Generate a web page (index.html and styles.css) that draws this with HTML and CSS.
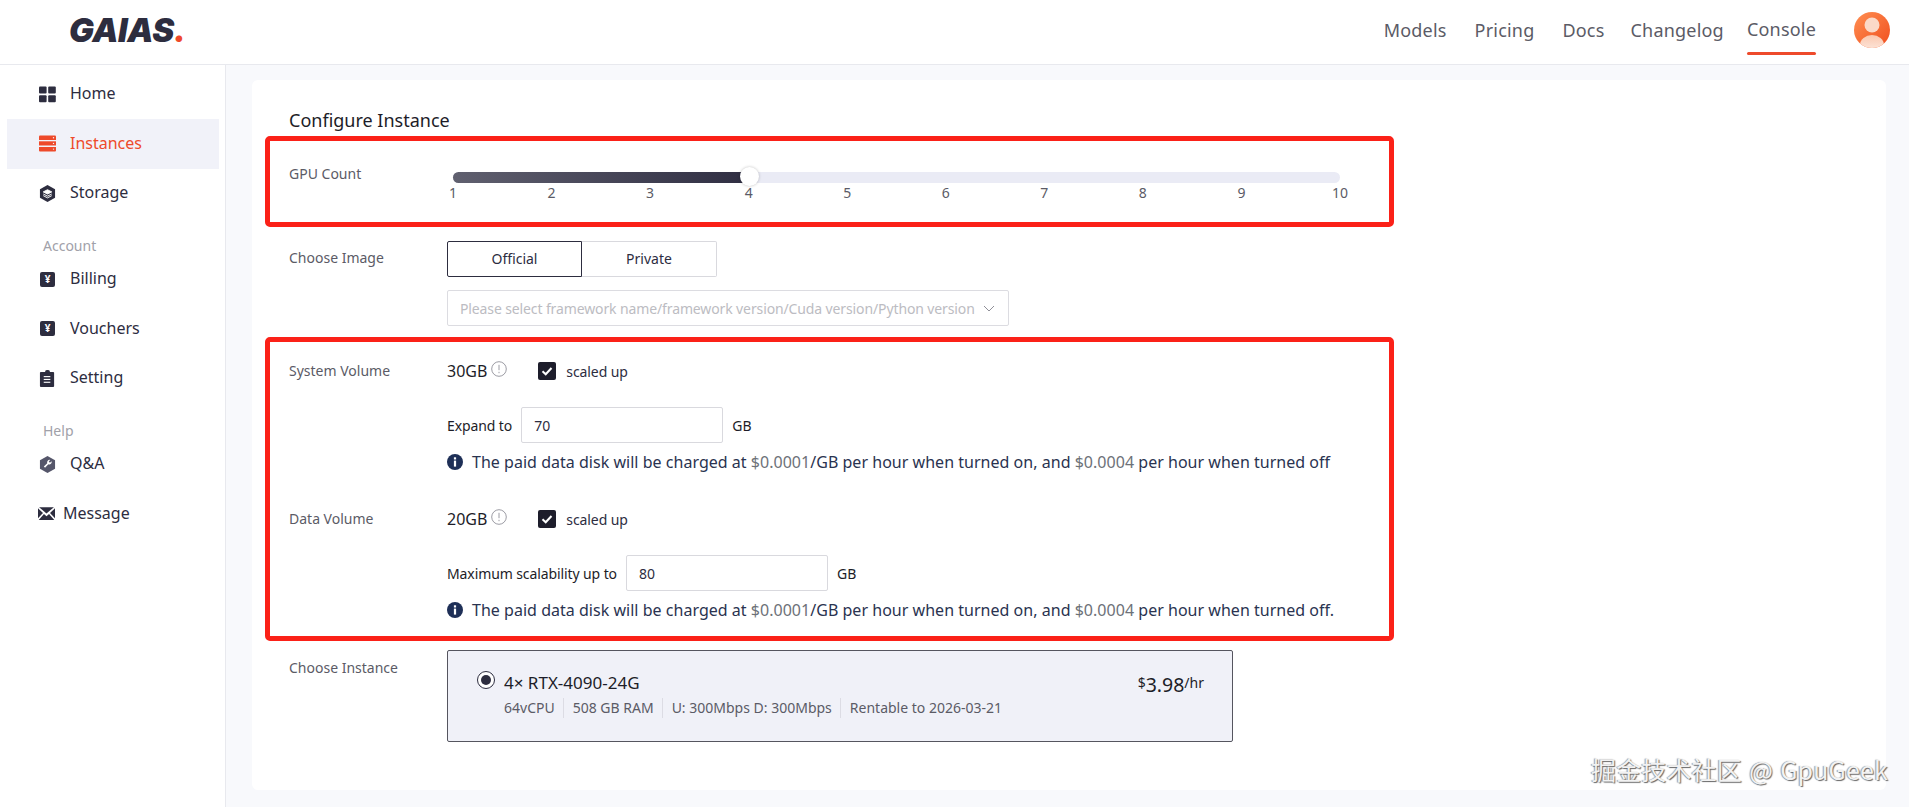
FILE: index.html
```html
<!DOCTYPE html>
<html lang="en">
<head>
    <meta charset="UTF-8">
    <meta name="viewport" content="width=device-width, initial-scale=1.0">
    <title>Configure Instance - GAIAS</title>
    <link rel="stylesheet" href="styles.css">
</head>
<body>
    <header class="topbar">
        <div class="logo">GAIAS<span class="logo-dot">.</span></div>
        <nav class="topnav">
            <a>Models</a>
            <a>Pricing</a>
            <a>Docs</a>
            <a class="tight">Changelog</a>
            <a class="current">Console</a>
        </nav>
        <svg class="avatar" viewBox="0 0 36 36">
            <defs>
                <linearGradient id="avatarBg" x1="0" y1="0" x2="1" y2="1">
                    <stop offset="0" stop-color="#ff8f52"/>
                    <stop offset="1" stop-color="#f04e1e"/>
                </linearGradient>
                <linearGradient id="avatarBody" x1="0" y1="0" x2="0" y2="1">
                    <stop offset="0" stop-color="#fbc7ae"/>
                    <stop offset="1" stop-color="#fdf1ea"/>
                </linearGradient>
                <clipPath id="avatarClip"><circle cx="18" cy="18" r="18"/></clipPath>
            </defs>
            <g clip-path="url(#avatarClip)">
                <rect width="36" height="36" fill="url(#avatarBg)"/>
                <circle cx="18" cy="13" r="7.5" fill="#fbd9c8"/>
                <ellipse cx="18" cy="33" rx="12" ry="10" fill="url(#avatarBody)"/>
            </g>
        </svg>
    </header>

    <div class="layout">
        <aside class="sidebar">
            <a class="side-item">
                <svg class="side-icon" viewBox="0 0 17 16"><rect x="0" y="0" width="7.6" height="7" rx="1"/><rect x="9.2" y="0" width="7.6" height="7" rx="1"/><rect x="0" y="8.8" width="7.6" height="7" rx="1"/><rect x="9.2" y="8.8" width="7.6" height="7" rx="1"/></svg>
                <span>Home</span>
            </a>
            <a class="side-item active">
                <svg class="side-icon" viewBox="0 0 17 16"><path d="M0 1a1 1 0 0 1 1-1h15a1 1 0 0 1 1 1v3.400H0z"/><rect x="0" y="5.800" width="17" height="4.200"/><path d="M0 11.400h17V15a1 1 0 0 1-1 1H1a1 1 0 0 1-1-1z"/><g fill="#f1f2f9"><circle cx="14.500" cy="2.300" r=".7"/><circle cx="14.500" cy="7.900" r=".7"/><circle cx="14.500" cy="13.600" r=".7"/></g></svg>
                <span>Instances</span>
            </a>
            <a class="side-item">
                <svg class="side-icon" viewBox="0 0 17 18"><path d="M8.500 0l8 4.400v9.200l-8 4.400-8-4.400V4.400z"/><g fill="none" stroke="#fff" stroke-width="1"><path d="M8.500 5l4.500 2.300-4.500 2.300L4 7.300z" fill="#fff"/><path d="M4 9.500l4.500 2.300L13 9.500"/><path d="M4 11.300l4.500 2.300 4.500-2.300"/></g></svg>
                <span>Storage</span>
            </a>

            <div class="side-group">Account</div>
            <a class="side-item">
                <i class="yen-icon">¥</i>
                <span>Billing</span>
            </a>
            <a class="side-item">
                <i class="yen-icon">¥</i>
                <span>Vouchers</span>
            </a>
            <a class="side-item">
                <svg class="side-icon" viewBox="0 0 16 18"><path d="M5.500 2V1.500a2.500 1.500 0 0 1 5 0V2h3.500a1 1 0 0 1 1 1v14a1 1 0 0 1-1 1H1a1 1 0 0 1-1-1V3a1 1 0 0 1 1-1z"/><g stroke="#fff" stroke-width="1.200"><path d="M4 7h7"/><path d="M4 10h7"/><path d="M4 13h7"/></g></svg>
                <span>Setting</span>
            </a>

            <div class="side-group">Help</div>
            <a class="side-item">
                <svg class="side-icon grey" viewBox="0 0 17 18"><path d="M8.500 0l8 4.400v9.200l-8 4.400-8-4.400V4.400z"/><path d="M12.800 5.500a2.600 2.600 0 0 1-3.400 3.300l-3.500 3.700-1.300-1.300 3.600-3.600a2.600 2.600 0 0 1 3.200-3.400L9.800 5.800l1.300 1.300z" fill="#fff"/></svg>
                <span>Q&amp;A</span>
            </a>
            <a class="side-item message">
                <svg class="side-icon" viewBox="0 0 16 12"><path d="M1 0h14L8 6z"/><path d="M0 1l4.700 4.500L0 10.500z"/><path d="M16 1l-4.700 4.500 4.700 5z"/><path d="M5.600 6.500L8 8.500l2.400-2L15.300 12H.7z"/></svg>
                <span>Message</span>
            </a>
        </aside>

        <main class="content">
            <section class="card">
                <h2 class="card-title">Configure Instance</h2>

                <div class="marked marked-gpu">
                    <div class="row">
                        <div class="row-label">GPU Count</div>
                        <div class="slider">
                            <div class="track">
                                <div class="track-fill"></div>
                                <div class="thumb"></div>
                            </div>
                            <div class="ticks">
                                <span>1</span><span>2</span><span>3</span><span>4</span><span>5</span>
                                <span>6</span><span>7</span><span>8</span><span>9</span><span>10</span>
                            </div>
                        </div>
                    </div>
                </div>

                <div class="row image-row">
                    <div class="row-label tall">Choose Image</div>
                    <div>
                        <div class="tabs">
                            <button class="tab selected">Official</button>
                            <button class="tab">Private</button>
                        </div>
                        <div class="select">
                            <span>Please select framework name/framework version/Cuda version/Python version</span>
                            <svg class="chevron" viewBox="0 0 12 7"><path d="M1 1l5 5 5-5"/></svg>
                        </div>
                    </div>
                </div>

                <div class="marked marked-volume">
                    <div class="row">
                        <div class="row-label">System Volume</div>
                        <div>
                            <div class="volume-head">
                                <span class="size">30GB</span>
                                <svg class="hint" viewBox="0 0 16 16"><circle cx="8" cy="8" r="7.300"/><path d="M8 3.800v5.400"/><path d="M8 10.800v1.400"/></svg>
                                <span class="check"><svg viewBox="0 0 18 18"><path d="M4.500 9.300l3.200 3 5.800-6.300"/></svg></span>
                                <span class="check-text">scaled up</span>
                            </div>
                            <div class="expand">
                                <label>Expand to</label>
                                <input class="expand-input" type="text" value="70">
                                <span>GB</span>
                            </div>
                            <div class="notice">
                                <svg class="notice-icon" viewBox="0 0 16 16"><circle cx="8" cy="8" r="8"/><rect x="6.900" y="3.300" width="2.200" height="2.200" fill="#fff"/><rect x="6.900" y="6.600" width="2.200" height="6" fill="#fff"/></svg>
                                <p>The paid data disk will be charged at <span class="money">$0.0001</span>/GB per hour when turned on, and <span class="money">$0.0004</span> per hour when turned off</p>
                            </div>
                        </div>
                    </div>
                    <div class="row data-row">
                        <div class="row-label">Data Volume</div>
                        <div>
                            <div class="volume-head">
                                <span class="size">20GB</span>
                                <svg class="hint" viewBox="0 0 16 16"><circle cx="8" cy="8" r="7.300"/><path d="M8 3.800v5.400"/><path d="M8 10.800v1.400"/></svg>
                                <span class="check"><svg viewBox="0 0 18 18"><path d="M4.500 9.300l3.200 3 5.800-6.300"/></svg></span>
                                <span class="check-text">scaled up</span>
                            </div>
                            <div class="expand">
                                <label>Maximum scalability up to</label>
                                <input class="expand-input" type="text" value="80">
                                <span>GB</span>
                            </div>
                            <div class="notice">
                                <svg class="notice-icon" viewBox="0 0 16 16"><circle cx="8" cy="8" r="8"/><rect x="6.900" y="3.300" width="2.200" height="2.200" fill="#fff"/><rect x="6.900" y="6.600" width="2.200" height="6" fill="#fff"/></svg>
                                <p>The paid data disk will be charged at <span class="money">$0.0001</span>/GB per hour when turned on, and <span class="money">$0.0004</span> per hour when turned off.</p>
                            </div>
                        </div>
                    </div>
                </div>

                <div class="row instance-row">
                    <div class="row-label instance-label">Choose Instance</div>
                    <div class="instance">
                        <span class="radio"></span>
                        <div class="instance-info">
                            <div class="instance-name">4× RTX-4090-24G</div>
                            <div class="instance-specs">
                                <span>64vCPU</span>
                                <span>508 GB RAM</span>
                                <span>U: 300Mbps D: 300Mbps</span>
                                <span>Rentable to 2026-03-21</span>
                            </div>
                        </div>
                        <div class="price"><small>$</small>3.98<small>/hr</small></div>
                    </div>
                </div>
            </section>
        </main>
    </div>

    <div class="watermark">掘金技术社区 @ GpuGeek</div>
</body>
</html>
```

FILE: styles.css
```css
* {
    box-sizing: border-box;
}
html, body {
    height: 100%;
}
body {
    margin: 0;
    height: 807px;
    overflow: hidden;
    font-family: "Noto Sans", "Noto Sans CJK SC", sans-serif;
    font-size: 14px;
    color: #2d2d3f;
    background-color: #fff;
}

/* top bar */
.topbar {
    display: flex;
    align-items: center;
    height: 65px;
    padding: 0 19px 5px 69px;
    border-bottom: 1px solid #e8e9ee;
}
.logo {
    font-family: Inter, "Liberation Sans", sans-serif;
    font-size: 33px;
    font-weight: 900;
    font-style: italic;
    letter-spacing: -0.4px;
    color: #2d2d3f;
}
.logo-dot {
    color: #ee4a2b;
}
.topnav {
    display: flex;
    align-items: center;
    gap: 28px;
    margin-left: auto;
    margin-right: 38px;
    font-size: 18px;
    letter-spacing: 0.2px;
    color: #5b5b66;
}
.topnav a.tight {
    margin-left: -2px;
}
.topnav a.current {
    position: relative;
    margin-left: -5px;
    top: -1px;
}
.topnav a.current::after {
    content: "";
    position: absolute;
    left: 0;
    right: 0;
    bottom: -14px;
    height: 3px;
    border-radius: 2px;
    background-color: #ee4a2b;
}
.avatar {
    width: 36px;
    height: 36px;
}

.layout {
    display: flex;
    height: 742px;
}

/* sidebar */
.sidebar {
    width: 226px;
    padding: 4.5px 6px 0 7px;
    border-right: 1px solid #e8e9ee;
    background-color: #fff;
}
.side-item {
    display: flex;
    align-items: center;
    height: 49.5px;
    padding-left: 32px;
    font-size: 16px;
    color: #2d2d3f;
}
.side-item span {
    margin-bottom: 2px;
}
.side-item.active {
    color: #ee4a2b;
    background-color: #f1f2f9;
}
.side-item.message {
    padding-left: 31px;
}
.side-icon {
    width: 17px;
    height: 17px;
    margin-right: 14px;
    fill: #2d2d3f;
}
.active .side-icon {
    fill: #ee4a2b;
}
.side-icon.grey {
    fill: #55566a;
}
.message .side-icon {
    margin-right: 8px;
}
.yen-icon {
    flex: none;
    width: 15px;
    height: 15px;
    margin: 0 15px 0 1px;
    border-radius: 2px;
    font-size: 10px;
    font-style: normal;
    font-weight: 700;
    line-height: 15px;
    text-align: center;
    color: #fff;
    background-color: #2d2d3f;
}
.side-group {
    height: 20px;
    margin-top: 17.5px;
    margin-bottom: -1px;
    padding-left: 36px;
    font-size: 14px;
    line-height: 20px;
    color: #a1a1a9;
}

/* main area */
.content {
    flex: 1;
    padding: 15px 23px 17px 26px;
    background-color: #f8f9fc;
}
.card {
    height: 710px;
    padding: 28px 37px 0;
    border-radius: 6px;
    background-color: #fff;
}
.card-title {
    margin: 0 0 4px;
    font-size: 18px;
    font-weight: 400;
    line-height: 24px;
    color: #1d1d28;
}
.marked {
    width: 1129px;
    margin-left: -24px;
    padding-left: 19px;
    border: 5px solid #fb2118;
    border-radius: 5px;
}
.marked-gpu {
    height: 91px;
    padding-top: 23px;
}
.marked-volume {
    height: 304px;
    margin-top: 11px;
    padding-top: 19px;
}
.row {
    display: flex;
}
.row-label {
    flex: 0 0 158px;
    line-height: 20px;
    color: #5b5b66;
}
.row-label.tall {
    line-height: 34px;
}

/* slider */
.slider {
    width: 887px;
    margin-left: 6px;
    padding-top: 8px;
}
.track {
    position: relative;
    height: 11px;
    border-radius: 6px;
    background-color: #eaebf5;
}
.track-fill {
    width: 297px;
    height: 100%;
    border-radius: 6px 0 0 6px;
    background: linear-gradient(90deg, #60606f, #2f2e42);
}
.thumb {
    position: absolute;
    left: 287px;
    top: -5px;
    width: 19px;
    height: 19px;
    border-radius: 50%;
    background-color: #fff;
    box-shadow: 0 0 3px rgba(0, 0, 0, 0.25);
}
.ticks {
    display: flex;
    justify-content: space-between;
    line-height: 20px;
    color: #5b5b66;
}
.ticks span {
    display: flex;
    justify-content: center;
    width: 0;
}

/* image selection */
.image-row {
    margin-top: 14px;
}
.tabs {
    display: flex;
}
.tab {
    width: 135px;
    height: 36px;
    padding: 0 0 2px;
    font-family: inherit;
    font-size: 14px;
    color: #2d2d3f;
    background-color: #fff;
    border: 1px solid #d9d9de;
    border-left: none;
    border-radius: 0 2px 2px 0;
}
.tab.selected {
    border: 1px solid #2d2d3f;
    border-radius: 2px 0 0 2px;
}
.select {
    display: flex;
    align-items: center;
    justify-content: space-between;
    width: 562px;
    height: 36px;
    margin-top: 13px;
    padding: 0 13px 0 12px;
    border: 1px solid #dcdce1;
    border-radius: 2px;
    letter-spacing: -0.12px;
    white-space: nowrap;
    color: #bcbcc2;
}
.chevron {
    width: 12px;
    height: 7px;
    fill: none;
    stroke: #8f8f98;
    stroke-width: 1;
}

/* volumes */
.volume-head {
    display: flex;
    align-items: center;
    height: 20px;
}
.size {
    font-size: 16px;
    color: #1d1d28;
}
.hint {
    width: 16px;
    height: 16px;
    margin-left: 4px;
    margin-top: -4px;
    fill: none;
    stroke: #9c9ca4;
    stroke-width: 1;
}
.check {
    display: block;
    width: 18px;
    height: 18px;
    margin-left: 31px;
    border-radius: 2px;
    background-color: #1d1d2b;
}
.check svg {
    display: block;
    fill: none;
    stroke: #fff;
    stroke-width: 2;
}
.check-text {
    margin-left: 10px;
    letter-spacing: -0.1px;
    color: #2d2d3f;
}
.expand {
    display: flex;
    align-items: center;
    gap: 9px;
    margin-top: 26px;
    color: #1d1d28;
}
.expand label {
    letter-spacing: -0.1px;
}
.expand-input {
    width: 202px;
    height: 36px;
    padding: 0 12px;
    font-family: inherit;
    font-size: 14px;
    color: #2d2d3f;
    background-color: #fff;
    border: 1px solid #d9d9de;
    border-radius: 2px;
}
.notice {
    display: flex;
    align-items: center;
    height: 20px;
    margin-top: 9px;
    font-size: 16px;
    line-height: 20px;
    letter-spacing: 0.025px;
    white-space: nowrap;
    color: #2a3350;
}
.notice p {
    margin: 0;
}
.notice-icon {
    flex: none;
    width: 16px;
    height: 16px;
    margin-right: 9px;
    fill: #1e2f57;
}
.money {
    color: #6d7178;
}
.data-row {
    margin-top: 37px;
}

/* instance card */
.instance-row {
    margin-top: 9px;
}
.instance-label {
    padding-top: 8px;
}
.instance {
    display: flex;
    width: 786px;
    height: 92px;
    padding: 20px 28px 0 29px;
    border: 1px solid #55555f;
    border-radius: 2px;
    background-color: #f0f1f8;
}
.radio {
    position: relative;
    flex: none;
    width: 18px;
    height: 18px;
    border: 1.5px solid #2d2d3f;
    border-radius: 50%;
    background-color: #fff;
}
.radio::after {
    content: "";
    position: absolute;
    left: 2.5px;
    top: 2.5px;
    width: 10px;
    height: 10px;
    border-radius: 50%;
    background-color: #2d2d3f;
}
.instance-info {
    margin-left: 9px;
}
.instance-name {
    font-size: 17px;
    line-height: 24px;
    color: #1d1d28;
}
.instance-specs {
    display: flex;
    margin-top: 3px;
    line-height: 20px;
    color: #5b5b66;
}
.instance-specs span + span {
    margin-left: 8px;
    padding-left: 9px;
    border-left: 1px solid #dcdce4;
}
.price {
    margin-left: auto;
    font-size: 19.5px;
    line-height: 24px;
    color: #1d1d28;
}
.price small {
    font-size: 14px;
    vertical-align: 4px;
}

.watermark {
    position: absolute;
    left: 1591px;
    top: 754px;
    font-family: "Noto Sans CJK SC", sans-serif;
    font-size: 25px;
    line-height: 30px;
    letter-spacing: 0.15px;
    word-spacing: 1.5px;
    color: #f2f2f2;
    text-shadow: 1px 1px 1px #666, -1px 0 1px #999;
    white-space: nowrap;
}
```
